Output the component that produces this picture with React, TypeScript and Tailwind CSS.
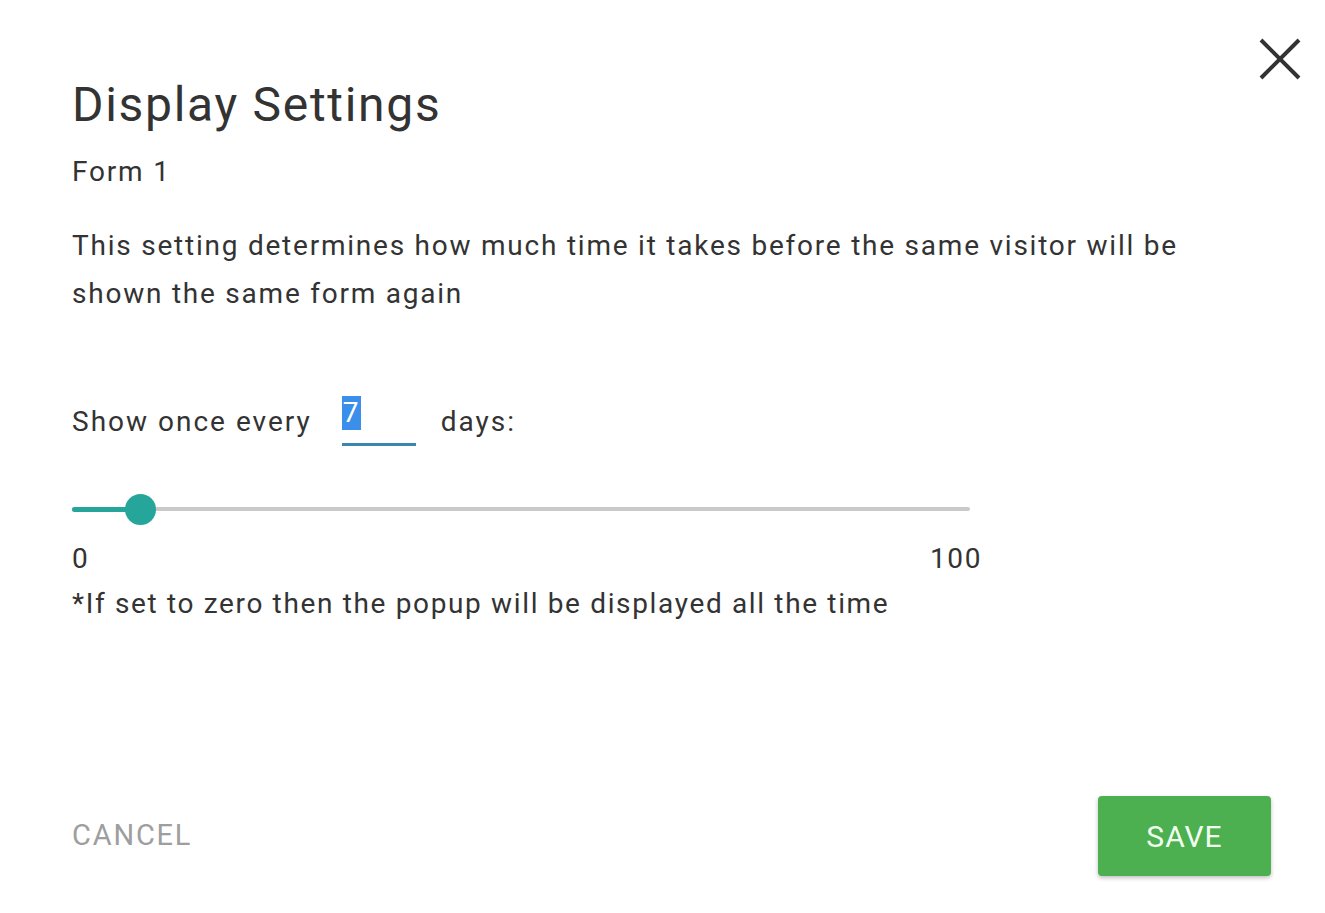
export default function App() {
  const value = 7;

  return (
    <div
      className="relative w-[1325px] h-[913px] bg-white text-[#333333] overflow-hidden"
      style={{ fontFamily: 'Roboto, "Liberation Sans", sans-serif' }}
    >
      {/* Close */}
      <button className="absolute top-[38px] left-[1259px] p-0">
        <svg width="42" height="42" viewBox="0 0 42 42" fill="none" stroke="#333333" strokeWidth="4">
          <path d="M2 2 L40 40 M40 2 L2 40" />
        </svg>
      </button>

      <div className="pl-[72px] pt-[77px]">
        <h1 className="text-[48px] leading-[56px] font-normal tracking-[1.7px]">Display Settings</h1>
        <div className="mt-[19px] text-[28px] leading-[40px] tracking-[1.8px]">Form 1</div>

        <p className="mt-[30px] text-[28px] leading-[48px] w-[1140px] tracking-[1.77px]">
          This setting determines how much time it takes before the same visitor will be shown the same form again
        </p>

        {/* Input row */}
        <div className="mt-[80px] flex items-center h-[48px] text-[28px] tracking-[2px]">
          <span>Show once every</span>
          <div className="ml-[30px] w-[74px] h-[48px] border-b-[3px] border-[#3a86ac] flex items-start">
            <span className="bg-[#3b8eea] text-white text-[28px] leading-[34px] pl-[1px] pr-[2px] -mt-[2px] tracking-normal">
              {value}
            </span>
          </div>
          <span className="ml-[25px]">days:</span>
        </div>

        {/* Slider */}
        <div className="mt-[47px] relative w-[898px] h-[32px] flex items-center">
          <div className="w-full h-[4px] rounded-full bg-[#c9c9c9]" />
          <div className="absolute left-0 w-[68px] h-[5px] rounded-full bg-[#26a69a]" />
          <div className="absolute left-[53px] w-[31px] h-[31px] rounded-full bg-[#26a69a]" />
        </div>

        <div className="mt-[14px] w-[910px] flex justify-between text-[28px] leading-[40px] tracking-[1.6px]">
          <span>0</span>
          <span>100</span>
        </div>
        <div className="mt-[5px] text-[28px] leading-[40px] tracking-[1.65px]">
          *If set to zero then the popup will be displayed all the time
        </div>
      </div>

      {/* Footer */}
      <div className="mt-[172px] pl-[72px] pr-[54px] flex items-center justify-between">
        <button className="text-[29px] text-[#9e9e9e] uppercase tracking-[1.8px]">Cancel</button>
        <button className="w-[173px] h-[80px] rounded-[4px] bg-[#4caf50] text-[#f1fff1] text-[30px] uppercase tracking-[1px] shadow-[0_2px_4px_rgba(0,0,0,0.25)]">
          Save
        </button>
      </div>
    </div>
  );
}
